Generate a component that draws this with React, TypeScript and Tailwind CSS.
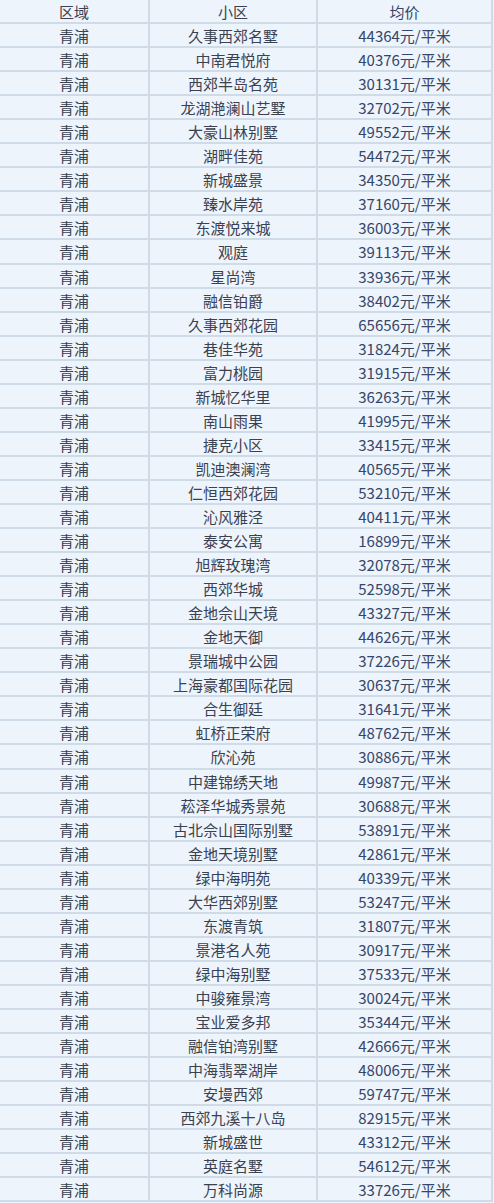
import React from 'react';

const rows: [string, string][] = [
  ['久事西郊名墅', '44364'],
  ['中南君悦府', '40376'],
  ['西郊半岛名苑', '30131'],
  ['龙湖滟澜山艺墅', '32702'],
  ['大豪山林别墅', '49552'],
  ['湖畔佳苑', '54472'],
  ['新城盛景', '34350'],
  ['臻水岸苑', '37160'],
  ['东渡悦来城', '36003'],
  ['观庭', '39113'],
  ['星尚湾', '33936'],
  ['融信铂爵', '38402'],
  ['久事西郊花园', '65656'],
  ['巷佳华苑', '31824'],
  ['富力桃园', '31915'],
  ['新城忆华里', '36263'],
  ['南山雨果', '41995'],
  ['捷克小区', '33415'],
  ['凯迪澳澜湾', '40565'],
  ['仁恒西郊花园', '53210'],
  ['沁风雅泾', '40411'],
  ['泰安公寓', '16899'],
  ['旭辉玫瑰湾', '32078'],
  ['西郊华城', '52598'],
  ['金地佘山天境', '43327'],
  ['金地天御', '44626'],
  ['景瑞城中公园', '37226'],
  ['上海豪都国际花园', '30637'],
  ['合生御廷', '31641'],
  ['虹桥正荣府', '48762'],
  ['欣沁苑', '30886'],
  ['中建锦绣天地', '49987'],
  ['菘泽华城秀景苑', '30688'],
  ['古北佘山国际别墅', '53891'],
  ['金地天境别墅', '42861'],
  ['绿中海明苑', '40339'],
  ['大华西郊别墅', '53247'],
  ['东渡青筑', '31807'],
  ['景港名人苑', '30917'],
  ['绿中海别墅', '37533'],
  ['中骏雍景湾', '30024'],
  ['宝业爱多邦', '35344'],
  ['融信铂湾别墅', '42666'],
  ['中海翡翠湖岸', '48006'],
  ['安墁西郊', '59747'],
  ['西郊九溪十八岛', '82915'],
  ['新城盛世', '43312'],
  ['英庭名墅', '54612'],
  ['万科尚源', '33726'],
];

function Row({ a, b, c }: { a: string; b: string; c: string }) {
  return (
    <div className="grid grid-cols-[150px_168px_173px] h-[24.06px] border-b-2 border-[#cfdce8]">
      <div className="flex items-center justify-center pt-[1px] border-r-2 border-[#cfdce8]">{a}</div>
      <div className="flex items-center justify-center pt-[1px] border-r-2 border-[#cfdce8]">{b}</div>
      <div className="flex items-center justify-center pt-[1px] text-[#34466a]">{c}</div>
    </div>
  );
}

export default function App() {
  return (
    <div
      className="w-[494px] h-[1203px] bg-[#eef4fb] text-[15px] leading-none text-[#3a4150] overflow-hidden"
      style={{ fontFamily: '"Noto Sans CJK SC", "Noto Sans", sans-serif' }}
    >
      <div className="w-[493px] border-r-2 border-[#cfdce8]">
        <Row a="区域" b="小区" c="均价" />
        {rows.map(([name, price]) => (
          <Row key={name} a="青浦" b={name} c={`${price}元/平米`} />
        ))}
      </div>
    </div>
  );
}
